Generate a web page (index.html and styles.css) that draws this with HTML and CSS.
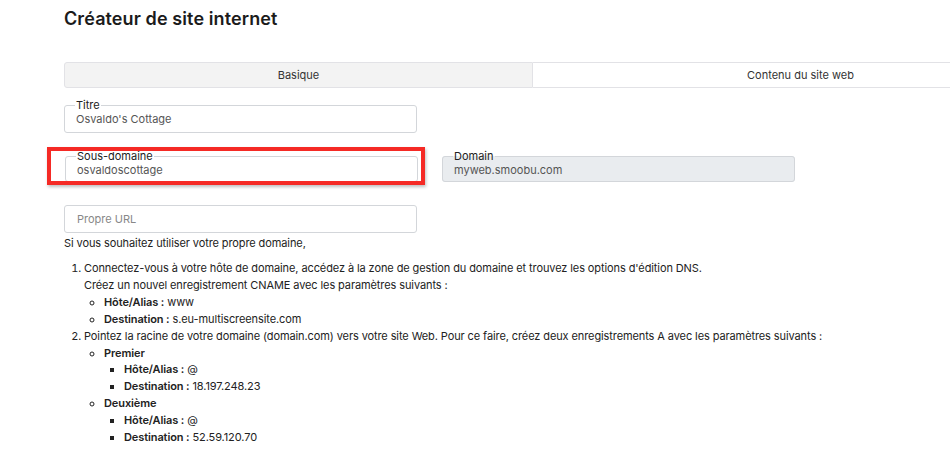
FILE: index.html
```html
<!DOCTYPE html>
<html lang="fr">
<head>
<meta charset="utf-8">
<link rel="stylesheet" href="styles.css">
</head>
<body>
<div class="page">
  <h1 class="title">Créateur de site internet</h1>
  <div class="tabs">
    <div class="tab tab-active">Basique</div>
    <div class="tab tab-right">Contenu du site web</div>
  </div>
  <fieldset class="field field-title">
    <legend>Titre</legend>
    <div class="value">Osvaldo's Cottage</div>
  </fieldset>
  <div class="row">
    <div class="highlight-wrap">
      <fieldset class="field field-short">
        <legend>Sous-domaine</legend>
        <div class="value">osvaldoscottage</div>
      </fieldset>
      <div class="highlight"></div>
    </div>
    <fieldset class="field field-short field-disabled">
      <legend>Domain</legend>
      <div class="value">myweb.smoobu.com</div>
    </fieldset>
  </div>
  <div class="url-input">Propre URL</div>
  <p class="intro">Si vous souhaitez utiliser votre propre domaine,</p>
  <ol class="steps">
    <li>Connectez-vous à votre hôte de domaine, accédez à la zone de gestion du domaine et trouvez les options d'édition DNS.<br>Créez un nouvel enregistrement CNAME avec les paramètres suivants :
      <ul class="sub">
        <li><b>Hôte/Alias :</b> www</li>
        <li><b>Destination :</b> s.eu-multiscreensite.com</li>
      </ul>
    </li>
    <li>Pointez la racine de votre domaine (domain.com) vers votre site Web. Pour ce faire, créez deux enregistrements A avec les paramètres suivants :
      <ul class="sub">
        <li><b>Premier</b>
          <ul class="subsub">
            <li><b>Hôte/Alias :</b> @</li>
            <li><b>Destination :</b> 18.197.248.23</li>
          </ul>
        </li>
        <li><b>Deuxième</b>
          <ul class="subsub">
            <li><b>Hôte/Alias :</b> @</li>
            <li><b>Destination :</b> 52.59.120.70</li>
          </ul>
        </li>
      </ul>
    </li>
  </ol>
</div>
</body>
</html>
```
FILE: styles.css
```css
html, body {
  margin: 0;
  padding: 0;
  background: #ffffff;
  overflow: hidden;
}
body {
  font-family: Inter, "Noto Sans", sans-serif;
  color: #222;
  width: 950px;
  height: 454px;
}
.page {
  padding: 0 0 0 64px;
}
.title {
  margin: 0;
  padding-top: 8px;
  height: 26px;
  font-size: 18px;
  font-weight: 600;
  letter-spacing: 0.1px;
  color: #1b1b1b;
  line-height: 22px;
}
.tabs {
  display: flex;
  margin-top: 28px;
  width: 1005px;
  height: 26px;
}
.tab {
  box-sizing: border-box;
  height: 26px;
  line-height: 24px;
  font-size: 11px;
  color: #333;
  text-align: center;
  border: 1px solid #e2e2e6;
}
.tab-active {
  width: 469px;
  background: #f3f3f3;
  border-radius: 3px 0 0 3px;
}
.tab-right {
  width: 536px;
  background: #fff;
  border-left: none;
}
.field {
  box-sizing: border-box;
  width: 353px;
  height: 33px;
  margin: 0;
  padding: 0 11px;
  border: 1px solid #d3d6da;
  border-radius: 3px;
  background: #fff;
}
.field-short {
  height: 31px;
}
.field legend {
  padding: 0 1px;
  margin-left: -1px;
  font-size: 11px;
  line-height: 11px;
  color: #222;
}
.field .value {
  font-size: 11px;
  line-height: 12px;
  color: #555;
  margin-top: 2px;
}
.field-title {
  margin-top: 12px;
}
.row {
  display: flex;
  gap: 24px;
  margin-top: 18px;
  margin-left: 1px;
}
.highlight-wrap {
  position: relative;
}
.highlight {
  position: absolute;
  left: -18px;
  top: -4px;
  width: 378px;
  height: 38px;
  box-sizing: border-box;
  border: 4px solid #f52a25;
  box-shadow: 1px 2px 3px rgba(0,0,0,0.25);
}
.field-disabled {
  background: #e9ecef;
}
.url-input {
  box-sizing: border-box;
  width: 353px;
  height: 28px;
  margin-top: 23px;
  padding: 0 12px;
  border: 1px solid #d3d6da;
  border-radius: 3px;
  font-size: 11px;
  line-height: 26px;
  color: #888;
}
.intro {
  margin: 2px 0 0 0;
  font-size: 11px;
  letter-spacing: -0.1px;
  line-height: 17px;
  color: #222;
}
.steps {
  margin: 8px 0 0 0;
  padding-left: 20px;
  font-size: 11px;
  line-height: 16.9px;
  letter-spacing: -0.1px;
  color: #222;
}
.steps b {
  font-weight: 600;
}
.sub {
  list-style: circle;
  margin: 0;
  padding-left: 20px;
}
.subsub {
  list-style: square;
  margin: 0;
  padding-left: 20px;
}
```
